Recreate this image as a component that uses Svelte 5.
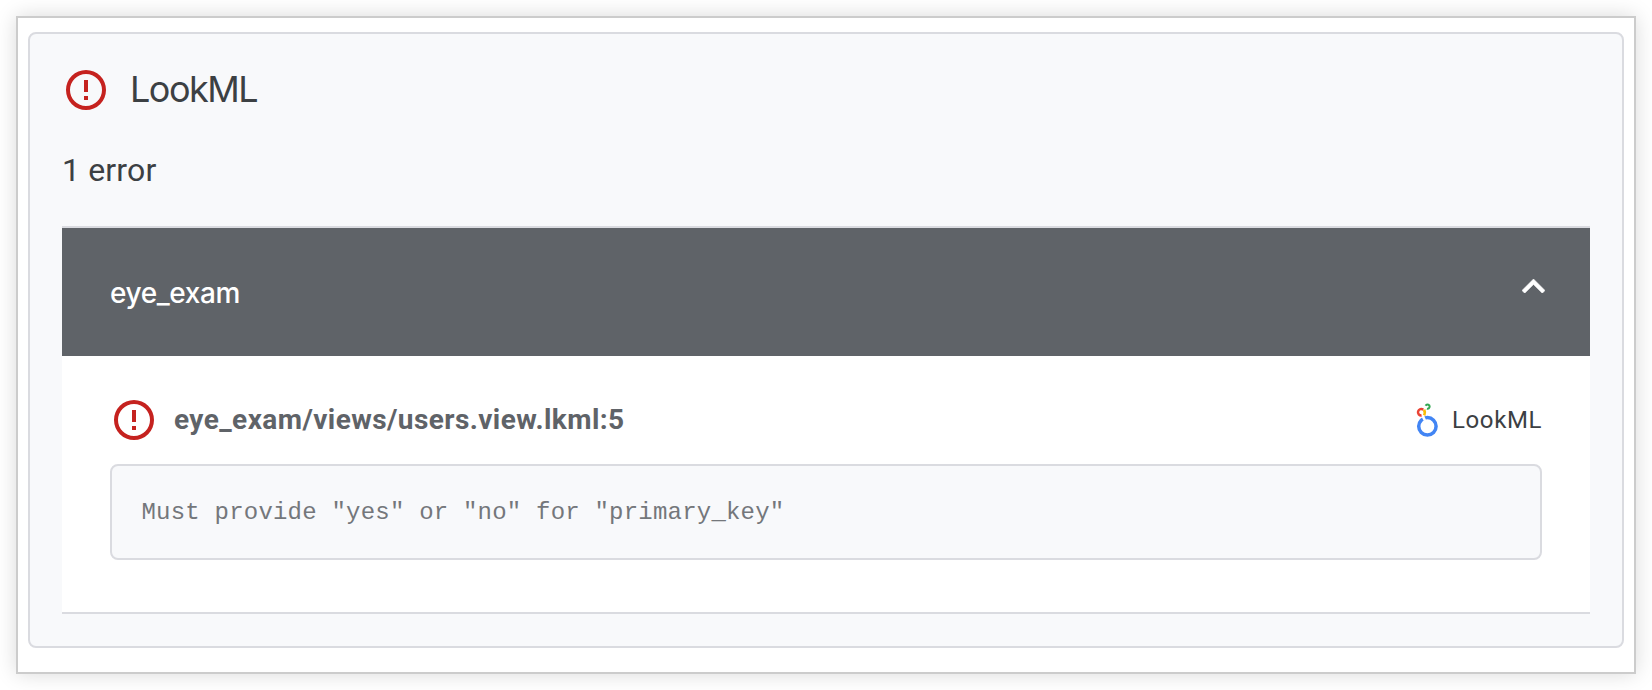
<script lang="ts">
  type ValidationError = {
    source: string;
    location: string;
    message: string;
  };

  export let project = "eye_exam";
  export let errors: ValidationError[] = [
    {
      source: "LookML",
      location: "eye_exam/views/users.view.lkml:5",
      message: 'Must provide "yes" or "no" for "primary_key"',
    },
  ];

  let open = true;

  $: summary = `${errors.length} ${errors.length === 1 ? "error" : "errors"}`;

  const toggle = () => {
    open = !open;
  };
</script>

<main>
  <section class="panel">
    <header class="title">
      <svg class="alert" viewBox="0 0 24 24" aria-hidden="true">
        <path
          d="M11 15h2v2h-2zm0-8h2v6h-2zm1-5a10 10 0 1 0 0 20 10 10 0 0 0 0-20zm0 18a8 8 0 1 1 0-16 8 8 0 0 1 0 16z"
        />
      </svg>
      <h1>LookML</h1>
    </header>
    <p class="summary">{summary}</p>

    <div class="group">
      <button class="group-header" aria-expanded={open} on:click={toggle}>
        <span>{project}</span>
        <svg class="chevron" class:closed={!open} viewBox="6 8 12 7.41">
          <path d="M12 8l-6 6 1.41 1.41L12 10.83l4.59 4.58L18 14z" />
        </svg>
      </button>
      {#if open}
        <div class="group-body">
          {#each errors as error}
            <article>
              <div class="error-heading">
                <svg class="alert" viewBox="0 0 24 24" aria-hidden="true">
                  <path
                    d="M11 15h2v2h-2zm0-8h2v6h-2zm1-5a10 10 0 1 0 0 20 10 10 0 0 0 0-20zm0 18a8 8 0 1 1 0-16 8 8 0 0 1 0 16z"
                  />
                </svg>
                <h2>{error.location}</h2>
                <svg class="looker" viewBox="0 0 22 34" aria-hidden="true">
                  <circle cx="11.4" cy="23.3" r="8.7" stroke="#4285f4" stroke-width="3.5" />
                  <path d="M6.6 12.6L8.8 17.2" stroke="#fff" stroke-width="2.6" />
                  <path d="M5.6 12.6A3.3 3.3 0 1 1 7.3 6.7" stroke="#ea4335" stroke-width="2.5" />
                  <path d="M8.1 6.7Q9.6 9.4 8.2 12.4" stroke="#fbbc04" stroke-width="2.8" />
                  <path d="M9.6 2.7A2.1 2.1 0 1 1 10.9 5.7" stroke="#34a853" stroke-width="2" />
                </svg>
                <span class="source">{error.source}</span>
              </div>
              <pre>{error.message}</pre>
            </article>
          {/each}
        </div>
      {/if}
    </div>
  </section>
</main>

<style>
  :global(body) {
    background: #fff;
  }
  main {
    box-sizing: border-box;
    width: 1620px;
    height: 658px;
    margin: 16px;
    padding: 14px 10px 24px;
    border: 2px solid #ccc;
    background: #fff;
    box-shadow: 0 0 20px rgba(0, 0, 0, 0.15);
    font-family: Roboto, sans-serif;
    color: #3c4043;
  }
  .panel {
    box-sizing: border-box;
    height: 616px;
    padding: 32px;
    border: 2px solid #dadbe0;
    border-radius: 8px;
    background: #f8f9fb;
  }
  .title {
    display: flex;
    align-items: center;
    height: 48px;
  }
  .alert {
    flex: none;
    width: 48px;
    height: 48px;
    fill: #c5221f;
  }
  h1 {
    margin: 0 0 2px 20px;
    font: 400 36px/46px Inter, sans-serif;
    letter-spacing: -1.5px;
  }
  .summary {
    margin: 32px 0 0;
    font-size: 32px;
    line-height: 48px;
    letter-spacing: 0.15px;
  }
  .group {
    margin-top: 32px;
    border-top: 2px solid #dadbe0;
    border-bottom: 2px solid #dadbe0;
    background: #fff;
  }
  .group-header {
    display: flex;
    align-items: center;
    justify-content: space-between;
    width: 100%;
    height: 128px;
    padding: 0 45px 0 48px;
    border: none;
    background: #5f6368;
    color: #fff;
    font: 500 28px/40px Inter, sans-serif;
    letter-spacing: -0.4px;
    cursor: pointer;
  }
  .group-header span {
    padding-top: 2px;
  }
  .chevron {
    width: 23px;
    height: 14.2px;
    margin-bottom: 12px;
    fill: #fff;
    stroke: #fff;
    stroke-width: 0.3;
  }
  .chevron.closed {
    transform: rotate(180deg);
  }
  .group-body {
    padding: 40px 48px 52px;
  }
  .error-heading {
    display: flex;
    align-items: center;
    height: 48px;
  }
  h2 {
    flex: 1;
    margin: 0 0 0 16px;
    color: #5f6368;
    font-size: 28px;
    font-weight: 700;
    line-height: 40px;
    letter-spacing: 0.42px;
  }
  .looker {
    width: 22px;
    height: 34px;
    fill: none;
  }
  .source {
    margin-left: 14px;
    font-size: 24px;
    line-height: 32px;
    letter-spacing: 0.6px;
  }
  pre {
    box-sizing: border-box;
    height: 96px;
    margin: 20px 0 0;
    padding: 27px 29.5px;
    border: 2px solid #dadbe0;
    border-radius: 8px;
    background: #f8f9fb;
    color: #74777b;
    font: 24px/40px "Courier New", "Liberation Mono", monospace;
    letter-spacing: 0.21px;
  }
</style>
